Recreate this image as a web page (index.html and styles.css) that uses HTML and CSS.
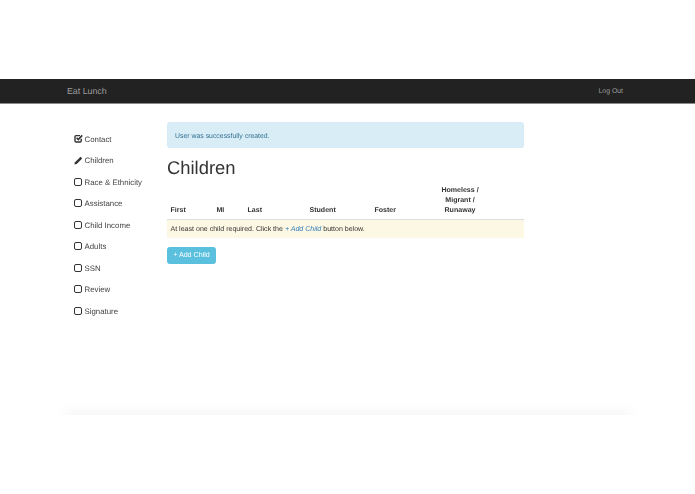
FILE: index.html
```html
<!DOCTYPE html>
<html lang="en">
<head>
<meta charset="utf-8">
<title>Eat Lunch</title>
<link rel="stylesheet" href="styles.css">
</head>
<body>
<div class="frame">
  <header class="navbar">
    <a class="brand">Eat Lunch</a>
    <a class="logout">Log Out</a>
  </header>
  <div class="content">
    <nav class="steps">
      <div class="step">
        <svg class="ico" viewBox="0 0 9 9"><path d="M7.2 4.8V7a1 1 0 0 1-1 1H2a1 1 0 0 1-1-1V2.6a1 1 0 0 1 1-1h4" fill="none" stroke="#333" stroke-width="1.4"/><path d="M2.6 3.8 4.3 5.5 8.2 1.4" fill="none" stroke="#333" stroke-width="1.6"/></svg>
        <span class="label">Contact</span>
      </div>
      <div class="step">
        <svg class="ico" viewBox="0 0 9 9"><path d="M0.4 8.6 1 6.2 6.6 0.8 8.2 2.4 2.7 7.9Z" fill="#333"/></svg>
        <span class="label">Children</span>
      </div>
      <div class="step"><span class="box"></span><span class="label">Race &amp; Ethnicity</span></div>
      <div class="step"><span class="box"></span><span class="label">Assistance</span></div>
      <div class="step"><span class="box"></span><span class="label">Child Income</span></div>
      <div class="step"><span class="box"></span><span class="label">Adults</span></div>
      <div class="step"><span class="box"></span><span class="label">SSN</span></div>
      <div class="step"><span class="box"></span><span class="label">Review</span></div>
      <div class="step"><span class="box"></span><span class="label">Signature</span></div>
    </nav>
    <main class="main">
      <div class="alert">User was successfully created.</div>
      <h1 class="title">Children</h1>
      <table class="kids">
        <thead>
          <tr>
            <th class="c-first">First</th>
            <th class="c-mi">MI</th>
            <th class="c-last">Last</th>
            <th class="c-student">Student</th>
            <th class="c-foster">Foster</th>
            <th class="c-home">Homeless /<br>Migrant /<br>Runaway</th>
            <th class="c-rest"></th>
          </tr>
        </thead>
        <tbody>
          <tr class="warn">
            <td colspan="7">At least one child required. Click the <a class="inline-link">+ Add Child</a> button below.</td>
          </tr>
        </tbody>
      </table>
      <button class="add" type="button">+ Add Child</button>
    </main>
  </div>
  <div class="fade"></div>
</div>
</body>
</html>
```
FILE: styles.css
```css
* { box-sizing: border-box; }
html, body { margin: 0; padding: 0; background: #fff; }
body {
  font-family: "Liberation Sans", Arial, sans-serif;
  color: #333;
  width: 695px;
  height: 494px;
  overflow: hidden;
  text-rendering: geometricPrecision;
}
.frame { padding-top: 79px; filter: blur(0.3px); will-change: opacity; }
.navbar {
  height: 25px;
  background: #222;
  border-bottom: 1px solid #8a8a8a;
  display: flex;
  justify-content: space-between;
  align-items: center;
  padding: 0 72px 1px 67px;
  color: #9d9d9d;
}
.brand { font-size: 8.8px; }
.logout { font-size: 6.9px; padding-top: 2px; }
.content {
  display: flex;
  height: 299px;
  padding: 18px 0 0 74px;
}
.steps { width: 93px; padding-top: 6px; flex: none; }
.step {
  display: flex;
  align-items: center;
  height: 21.5px;
  font-size: 7.85px;
  color: #444;
}
.label { padding-top: 1px; }
.ico { width: 9px; height: 9px; margin-right: 1.5px; flex: none; }
.box {
  width: 8px;
  height: 8px;
  border: 1.7px solid #333;
  border-radius: 2px;
  margin-right: 2.5px;
  flex: none;
}
.main { width: 357px; flex: none; }
.alert {
  height: 26px;
  background: #d9edf7;
  border: 1px solid #d6ebf6;
  border-radius: 2.5px;
  color: #31708f;
  font-size: 6.9px;
  line-height: 27px;
  padding-left: 7px;
}
.title {
  font-size: 18.4px;
  font-weight: 400;
  color: #333;
  line-height: 20px;
  margin: 9.5px 0 8.5px;
}
.kids {
  width: 357px;
  border-collapse: collapse;
  table-layout: fixed;
  font-size: 7.05px;
}
.kids th {
  font-weight: 700;
  text-align: left;
  vertical-align: bottom;
  line-height: 10px;
  padding: 0 3.5px 3px;
  border-bottom: 1.5px solid #ddd;
  color: #333;
}
.c-first { width: 46px; }
.c-mi { width: 31px; }
.c-last { width: 62px; }
.c-student { width: 65px; }
.c-foster { width: 64px; }
.c-home { width: 50px; text-align: center !important; white-space: nowrap; }
.warn td {
  background: #fcf8e3;
  height: 18px;
  padding: 1px 3.5px 0;
  line-height: 17px;
  color: #333;
}
.inline-link { color: #337ab7; font-style: italic; }
.add {
  display: block;
  margin-top: 8.5px;
  width: 49px;
  height: 17px;
  padding: 0;
  background: #5bc0de;
  border: 1px solid #5bc0de;
  border-radius: 2.5px;
  color: #fff;
  font-family: inherit;
  font-size: 7.15px;
}
.fade {
  height: 12px;
  margin: 0 55px;
  background: linear-gradient(to bottom, #fff, #f8f8f8);
  -webkit-mask-image: linear-gradient(to right, transparent, #000 20px, #000 calc(100% - 20px), transparent);
  mask-image: linear-gradient(to right, transparent, #000 20px, #000 calc(100% - 20px), transparent);
}
```
